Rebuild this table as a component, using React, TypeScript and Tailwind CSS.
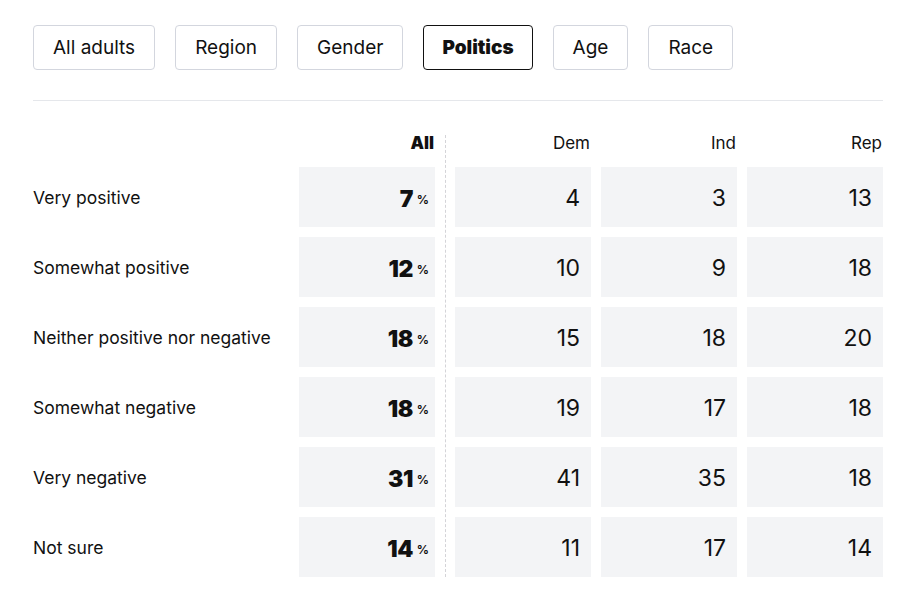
import React from "react"

const tabs = ["All adults", "Region", "Gender", "Politics", "Age", "Race"]
const active = "Politics"

const rows: { label: string; all: number; dem: number; ind: number; rep: number }[] = [
  { label: "Very positive", all: 7, dem: 4, ind: 3, rep: 13 },
  { label: "Somewhat positive", all: 12, dem: 10, ind: 9, rep: 18 },
  { label: "Neither positive nor negative", all: 18, dem: 15, ind: 18, rep: 20 },
  { label: "Somewhat negative", all: 18, dem: 19, ind: 17, rep: 18 },
  { label: "Very negative", all: 31, dem: 41, ind: 35, rep: 18 },
  { label: "Not sure", all: 14, dem: 11, ind: 17, rep: 14 },
]

// ─── Group column (Dem / Ind / Rep) ─────────────────────────────────────────

function GroupColumn({ title, values }: { title: string; values: number[] }) {
  return (
    <div className="flex w-[136px] shrink-0 flex-col">
      <div className="flex h-[27px] items-center justify-end pr-[1px] text-[17px] text-[#111]">{title}</div>
      <div className="mt-[10px] flex flex-col gap-[10px]">
        {values.map((v, i) => (
          <div key={i} className="flex h-[60px] items-center justify-end bg-[#f3f4f6] pr-[11px] pt-[3px] text-[23px] text-[#111]">
            {v}
          </div>
        ))}
      </div>
    </div>
  )
}

export default function App() {
  return (
    <div className="min-h-screen bg-white pl-[33px] pr-[24px] pt-[25px] text-[#111]" style={{ fontFamily: "Inter, 'Liberation Sans', sans-serif" }}>
      {/* Tabs */}
      <div className="flex gap-[20px]">
        {tabs.map((t) => (
          <button
            key={t}
            className={
              t === active
                ? "h-[45px] rounded-[4px] border border-[#111] px-[18px] pt-[2px] text-[19px] font-black text-[#111]"
                : "h-[45px] rounded-[4px] border border-[#d3d6de] px-[19px] pt-[2px] text-[19px] text-[#111]"
            }
          >
            {t}
          </button>
        ))}
      </div>

      <div className="mt-[30px] h-px w-[850px] bg-[#e5e7eb]" />

      {/* Table */}
      <div className="mt-[29px] flex">
        {/* labels */}
        <div className="flex w-[266px] shrink-0 flex-col">
          <div className="h-[27px]" />
          <div className="mt-[10px] flex flex-col gap-[10px]">
            {rows.map((r) => (
              <div key={r.label} className="flex h-[60px] items-center pt-[3px] text-[17.5px]">
                {r.label}
              </div>
            ))}
          </div>
        </div>

        {/* All column */}
        <div className="flex w-[136px] shrink-0 flex-col">
          <div className="flex h-[27px] items-center justify-end pr-[1px] text-[17px] font-black">All</div>
          <div className="mt-[10px] flex flex-col gap-[10px]">
            {rows.map((r) => (
              <div key={r.label} className="flex h-[60px] items-baseline justify-end gap-[4px] bg-[#f3f4f6] pr-[6px] pt-[15px]">
                <span className="text-[23px] font-black tracking-[-0.5px]">{r.all}</span>
                <span className="relative -top-[3px] text-[12px] font-bold">%</span>
              </div>
            ))}
          </div>
        </div>

        {/* dashed separator */}
        <div className="flex w-[20px] shrink-0 justify-center pt-[5px]">
          <div className="h-full border-l border-dashed border-[#d4d4d8]" />
        </div>

        <div className="flex gap-[10px]">
          <GroupColumn title="Dem" values={rows.map((r) => r.dem)} />
          <GroupColumn title="Ind" values={rows.map((r) => r.ind)} />
          <GroupColumn title="Rep" values={rows.map((r) => r.rep)} />
        </div>
      </div>
    </div>
  )
}
